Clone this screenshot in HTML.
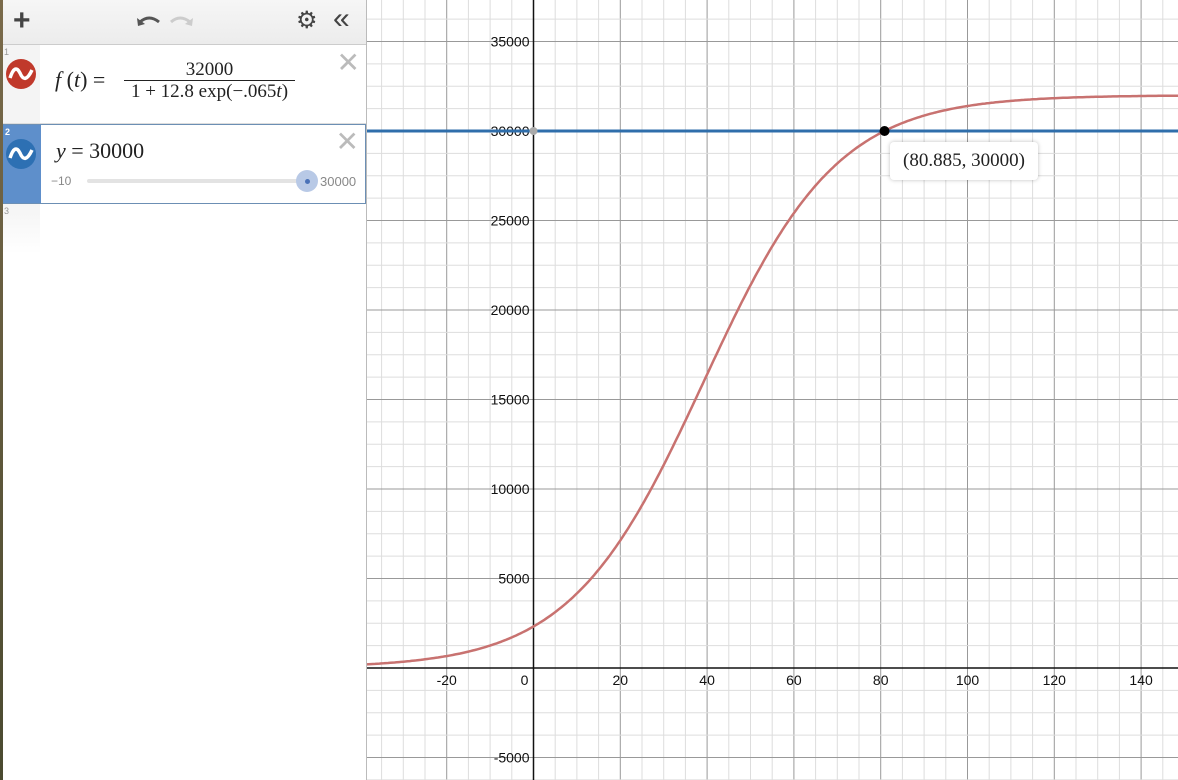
<!DOCTYPE html>
<html><head><meta charset="utf-8">
<style>
body{margin:0;width:1178px;height:780px;overflow:hidden;background:#fff;font-family:"Liberation Sans",sans-serif;position:relative}
#panel{position:absolute;left:0;top:0;width:366px;height:780px;background:#fff;border-right:1px solid #bbb;z-index:2}
#tb{position:absolute;left:0;top:0;width:366px;height:44px;background:linear-gradient(#f6f6f6,#ececec);border-bottom:1px solid #ccc}
.row{position:absolute;left:0;width:366px;background:#fff}
.gut{position:absolute;left:0;top:0;width:40px;height:100%;background:#f4f4f4}
.num{position:absolute;left:4px;top:2px;font-size:9px;color:#999}
.ic{position:absolute;left:6px;width:30px;height:30px;border-radius:50%}
.x{position:absolute;right:6px;top:6px;font-size:28px;color:#bbb;line-height:24px}
.m{font-family:"Liberation Serif",serif;color:#222;position:absolute}
svg{position:absolute;left:0;top:0}
</style></head><body>
<svg width="1178" height="780" id="g"></svg>
<div style="position:absolute;left:890px;top:142px;width:148px;height:38px;background:#fff;border-radius:4px;box-shadow:0 0 4px rgba(0,0,0,.25);font-family:'Liberation Serif',serif;font-size:19px;color:#222;line-height:38px;text-align:center;z-index:1">(80.885, 30000)</div>
<div id="panel">
 <div id="tb">
  <div style="position:absolute;left:13px;top:7px;font-size:30px;color:#444;font-weight:bold;line-height:28px">+</div>
  <svg style="left:135px;top:12px" width="60" height="20"><path d="M5 10 Q14 2 24 10" stroke="#555" stroke-width="3" fill="none"/><path d="M2 6 L3 14 L10 12Z" fill="#555"/><path d="M36 10 Q45 2 55 10" stroke="#ccc" stroke-width="3" fill="none"/><path d="M58 6 L57 14 L50 12Z" fill="#ccc"/></svg>
  <div style="position:absolute;left:296px;top:6px;font-size:24px;color:#444">⚙</div>
  <div style="position:absolute;left:333px;top:4px;font-size:30px;color:#444;line-height:30px">«</div>
 </div>
 <div class="row" style="top:45px;height:78px;border-bottom:1px solid #ddd">
  <div class="gut"></div><div class="num">1</div>
  <div class="ic" style="top:14px;background:#c0392b"><svg width="30" height="30"><path d="M4 19 Q9 4 14 14 Q19 26 26 11" stroke="#fff" stroke-width="3.5" fill="none"/></svg></div>
  <div class="x">✕</div>
  <div class="m" style="left:55px;top:22px;font-size:22px"><i>f</i> (<i>t</i>) =</div>
  <div class="m" style="left:124px;top:14px;width:171px;text-align:center;font-size:19px">32000</div>
  <div style="position:absolute;left:124px;top:35px;width:171px;height:1px;background:#222"></div>
  <div class="m" style="left:120px;top:36px;width:179px;text-align:center;font-size:19px;white-space:nowrap">1 + 12.8 exp(−.065<i>t</i>)</div>
 </div>
 <div class="row" style="top:124px;height:78px;border:1px solid #6c8fb4;width:364px">
  <div class="gut" style="background:#5e8fcb"></div><div class="num" style="color:#fff;font-weight:bold">2</div>
  <div class="ic" style="top:14px;background:#2d70b3;left:5px"><svg width="30" height="30"><path d="M4 19 Q9 4 14 14 Q19 26 26 11" stroke="#fff" stroke-width="3.5" fill="none"/></svg></div>
  <div class="x" style="top:5px">✕</div>
  <div class="m" style="left:55px;top:13px;font-size:22px"><i>y</i> = 30000</div>
  <div style="position:absolute;left:50px;top:49px;font-size:12px;color:#888">−10</div>
  <div style="position:absolute;left:86px;top:54px;width:218px;height:4px;background:#e3e3e3;border-radius:2px"></div>
  <div style="position:absolute;left:295px;top:45px;width:22px;height:22px;border-radius:50%;background:#b8c9e6"></div>
  <div style="position:absolute;left:304px;top:54px;width:5px;height:5px;border-radius:50%;background:#4a72b8"></div>
  <div style="position:absolute;left:319px;top:49px;font-size:13px;color:#888">30000</div>
 </div>
 <div class="row" style="top:204px;height:50px">
  <div class="gut" style="background:linear-gradient(#f4f4f4,#fff)"></div><div class="num">3</div>
 </div>
</div>
<div style="position:absolute;left:0;top:0;width:3px;height:780px;background:linear-gradient(#7a6a4a,#4a4a30);z-index:3"></div>
<script>
var s='',X0=533.5,SX=4.34,Y0=668,SY=89.5/5000;
function px(t){return X0+t*SX}function py(v){return Y0-v*SY}
for(var t=-40;t<=150;t+=5){var x=px(t),maj=(t%20==0);
 s+='<line x1="'+x+'" y1="0" x2="'+x+'" y2="780" stroke="'+(maj?'#999':'#ddd')+'" stroke-width="1"/>';}
for(var v=-10000;v<=40000;v+=1250){var y=py(v),maj=(v%5000==0);
 s+='<line x1="367" y1="'+y+'" x2="1178" y2="'+y+'" stroke="'+(maj?'#999':'#ddd')+'" stroke-width="1"/>';}
s+='<line x1="'+X0+'" y1="0" x2="'+X0+'" y2="780" stroke="#111" stroke-width="1.5"/>';
s+='<line x1="367" y1="'+Y0+'" x2="1178" y2="'+Y0+'" stroke="#111" stroke-width="1.5"/>';
var lab='font-family="Liberation Sans" font-size="14" fill="#111"';
[-20,0,20,40,60,80,100,120,140].forEach(function(t){s+='<text x="'+(t==0?px(t)-9:px(t))+'" y="'+(Y0+17)+'" '+lab+' text-anchor="middle">'+(t<0?'-'+(-t):t)+'</text>'});
[-5000,5000,10000,15000,20000,25000,30000,35000].forEach(function(v){s+='<text x="'+(X0-4)+'" y="'+(py(v)+5)+'" '+lab+' text-anchor="end">'+v+'</text>'});
var d='';for(var t=-39;t<=149;t+=0.5){var f=32000/(1+12.8*Math.exp(-.065*t));d+=(d?'L':'M')+px(t).toFixed(1)+' '+py(f).toFixed(1);}
s+='<path d="'+d+'" stroke="#c87270" stroke-width="2.5" fill="none"/>';
s+='<line x1="367" y1="'+py(30000)+'" x2="1178" y2="'+py(30000)+'" stroke="#2f6eab" stroke-width="3"/>';
s+='<circle cx="'+X0+'" cy="'+py(30000)+'" r="4" fill="#aaa"/>';
s+='<circle cx="'+px(80.885)+'" cy="'+py(30000)+'" r="5" fill="#000"/>';
document.getElementById('g').innerHTML=s;
</script>
</body></html>
